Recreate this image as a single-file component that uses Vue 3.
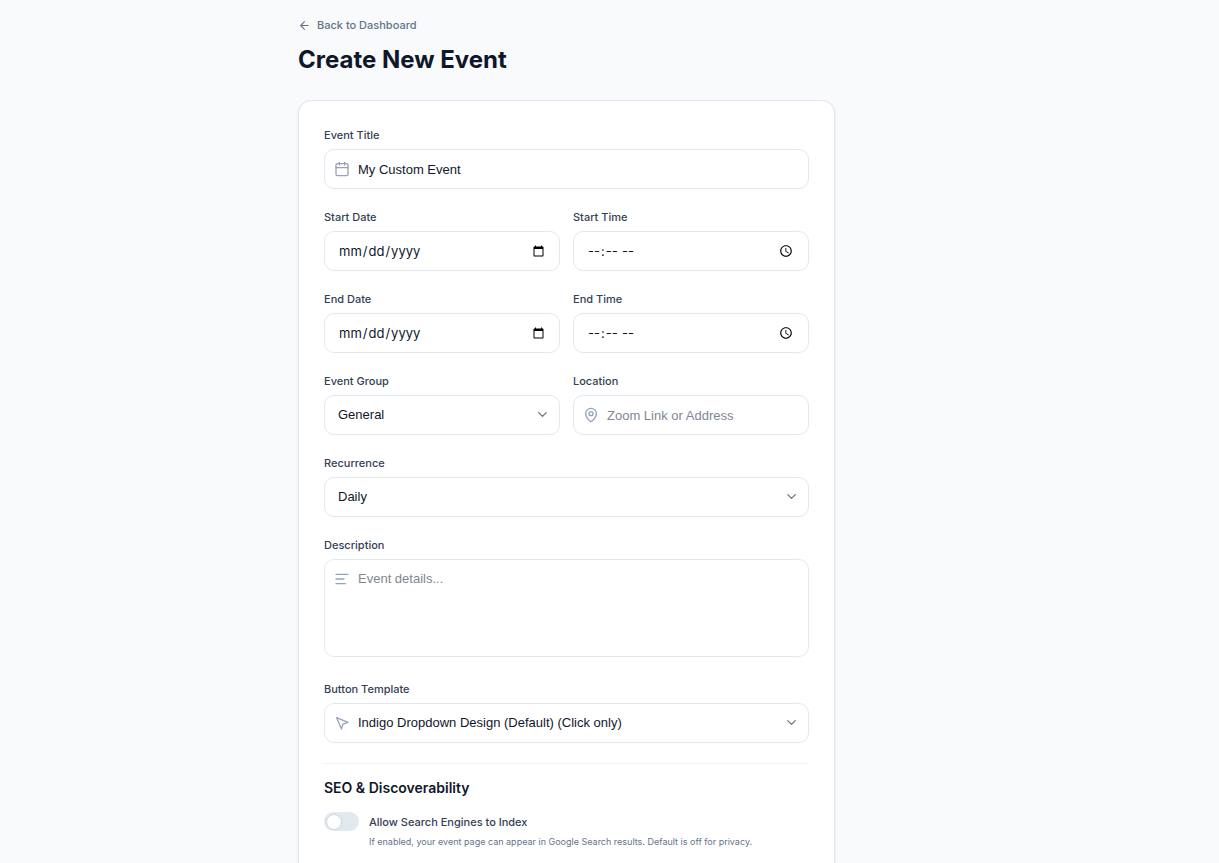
<script setup>
import { ref } from 'vue'

const title = ref('My Custom Event')
const group = ref('General')
const recurrence = ref('Daily')
const template = ref('Indigo Dropdown Design (Default) (Click only)')
const indexable = ref(false)
</script>

<template>
  <main class="page">
    <div class="content">
      <a class="back" href="#">
        <svg class="back-icon" viewBox="0 0 24 24" aria-hidden="true"><path d="m12 19-7-7 7-7M19 12H5" /></svg>
        Back to Dashboard
      </a>
      <h1>Create New Event</h1>

      <form class="card" @submit.prevent>
        <div class="field">
          <label for="title">Event Title</label>
          <div class="control">
            <svg class="icon" viewBox="0 0 24 24" aria-hidden="true"><path d="M8 2v4M16 2v4M3 10h18" /><rect x="3" y="4" width="18" height="18" rx="2" /></svg>
            <input id="title" v-model="title" class="box with-icon" type="text" />
          </div>
        </div>

        <div class="row">
          <div class="field">
            <label for="start-date">Start Date</label>
            <input id="start-date" class="box picker" type="date" />
          </div>
          <div class="field">
            <label for="start-time">Start Time</label>
            <input id="start-time" class="box picker" type="time" />
          </div>
        </div>

        <div class="row">
          <div class="field">
            <label for="end-date">End Date</label>
            <input id="end-date" class="box picker" type="date" />
          </div>
          <div class="field">
            <label for="end-time">End Time</label>
            <input id="end-time" class="box picker" type="time" />
          </div>
        </div>

        <div class="row">
          <div class="field">
            <label for="group">Event Group</label>
            <div class="control">
              <select id="group" v-model="group" class="box"><option>General</option></select>
              <svg class="chevron" viewBox="0 0 24 24" aria-hidden="true"><path d="m6 9 6 6 6-6" /></svg>
            </div>
          </div>
          <div class="field">
            <label for="location">Location</label>
            <div class="control">
              <svg class="icon" viewBox="0 0 24 24" aria-hidden="true"><path d="M20 10c0 5-5.5 10.2-7.4 11.8a1 1 0 0 1-1.2 0C9.5 20.2 4 15 4 10a8 8 0 0 1 16 0" /><circle cx="12" cy="10" r="3" /></svg>
              <input id="location" class="box with-icon" type="text" placeholder="Zoom Link or Address" />
            </div>
          </div>
        </div>

        <div class="field">
          <label for="recurrence">Recurrence</label>
          <div class="control">
            <select id="recurrence" v-model="recurrence" class="box"><option>Daily</option></select>
            <svg class="chevron" viewBox="0 0 24 24" aria-hidden="true"><path d="m6 9 6 6 6-6" /></svg>
          </div>
        </div>

        <div class="field description">
          <label for="description">Description</label>
          <div class="control">
            <svg class="icon" viewBox="0 0 24 24" aria-hidden="true"><path d="M21 5H3M15 12H3M17 19H3" /></svg>
            <textarea id="description" class="box with-icon" placeholder="Event details..."></textarea>
          </div>
        </div>

        <div class="field">
          <label for="template">Button Template</label>
          <div class="control">
            <svg class="icon" viewBox="0 0 24 24" aria-hidden="true"><path d="m4 4 7.07 17 2.51-7.39L21 11.07z" /></svg>
            <select id="template" v-model="template" class="box with-icon"><option>Indigo Dropdown Design (Default) (Click only)</option></select>
            <svg class="chevron" viewBox="0 0 24 24" aria-hidden="true"><path d="m6 9 6 6 6-6" /></svg>
          </div>
        </div>

        <section class="seo">
          <h2>SEO &amp; Discoverability</h2>
          <div class="toggle-row">
            <input id="indexable" v-model="indexable" class="switch" type="checkbox" aria-describedby="index-hint" />
            <div>
              <label class="toggle-label" for="indexable">Allow Search Engines to Index</label>
              <p id="index-hint">If enabled, your event page can appear in Google Search results. Default is off for privacy.</p>
            </div>
          </div>
        </section>
      </form>
    </div>
  </main>
</template>

<style>
html,
body {
  background: #f8fafc;
}
</style>

<style scoped>
.page {
  font-family: Inter, "Liberation Sans", sans-serif;
  color: #0f172a;
  padding: 15px 86px 32px 0;
}
.content {
  max-width: 537px;
  margin: 0 auto;
}
.back {
  display: flex;
  width: fit-content;
  align-items: center;
  gap: 6px;
  font-size: 11px;
  line-height: 20px;
  font-weight: 500;
  color: #64748b;
  text-decoration: none;
}
svg {
  fill: none;
  stroke: currentColor;
  stroke-width: 2;
  stroke-linecap: round;
  stroke-linejoin: round;
}
.back-icon {
  width: 13px;
  height: 13px;
}
h1 {
  margin: 9px 0 24px;
  font-size: 24px;
  line-height: 32px;
  font-weight: 700;
}
.card {
  display: flex;
  flex-direction: column;
  gap: 20px;
  padding: 26px 25px;
  background: #fff;
  border: 1px solid #e2e8f0;
  border-radius: 13px;
  box-shadow: 0 1px 2px rgba(15, 23, 42, 0.12);
}
.row {
  display: grid;
  grid-template-columns: 1fr 1fr;
  gap: 13px;
}
.field {
  display: flex;
  flex-direction: column;
  gap: 6px;
  min-width: 0;
}
.description {
  margin-bottom: 4px;
}
label {
  font-size: 11px;
  line-height: 16px;
  font-weight: 500;
  color: #334155;
}
.control {
  position: relative;
  display: flex;
}
.box {
  box-sizing: border-box;
  width: 100%;
  height: 40px;
  margin: 0;
  padding: 0 12px 0 13px;
  border: 1px solid #e2e8f0;
  border-radius: 10px;
  background: #fff;
  color: #0f172a;
  font-family: "Liberation Sans", Arial, sans-serif;
  font-size: 13px;
  line-height: 20px;
  outline-color: #6366f1;
}
.box.picker {
  font-family: Inter, "Liberation Sans", sans-serif;
}
select.box {
  appearance: none;
}
textarea.box {
  height: 98px;
  padding-top: 9px;
  resize: none;
}
.box.with-icon {
  padding-left: 33px;
}
.box::placeholder {
  color: #7f8794;
  opacity: 1;
}
.icon {
  position: absolute;
  left: 10px;
  top: 12px;
  width: 16px;
  height: 16px;
  color: #94a3b8;
  pointer-events: none;
}
.chevron {
  position: absolute;
  right: 10px;
  top: 12px;
  width: 15px;
  height: 15px;
  color: #6b7280;
  pointer-events: none;
}
.seo {
  border-top: 1px solid #f1f5f9;
  padding-top: 13px;
}
h2 {
  margin: 0 0 13px;
  font-size: 14px;
  line-height: 22px;
  font-weight: 600;
}
.toggle-row {
  display: flex;
  gap: 10px;
}
.switch {
  appearance: none;
  flex: none;
  display: flex;
  align-items: center;
  box-sizing: border-box;
  width: 35px;
  height: 19px;
  margin: 0;
  padding: 2px;
  border-radius: 10px;
  background: #e2e8f0;
  cursor: pointer;
}
.switch::before {
  content: "";
  box-sizing: border-box;
  width: 16px;
  height: 16px;
  border: 1px solid #d1d5db;
  border-radius: 50%;
  background: #fff;
}
.switch:checked {
  justify-content: flex-end;
  background: #6366f1;
}
.toggle-label {
  display: block;
  line-height: 20px;
}
p {
  margin: 2px 0 0;
  font-size: 9px;
  line-height: 16px;
  color: #64748b;
}
</style>
